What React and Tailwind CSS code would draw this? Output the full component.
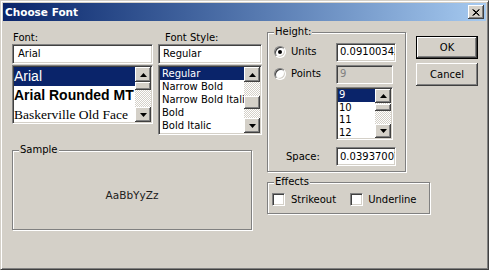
import React from "react";

const ui = "font-['DejaVu_Sans',sans-serif] text-[10px] leading-[12px] text-black";
const sunken =
  "border border-t-[#808080] border-l-[#808080] border-b-white border-r-white shadow-[inset_1px_1px_0_#404040,inset_-1px_-1px_0_#d4d0c8]";
const raised =
  "bg-[#d4d0c8] shadow-[inset_-1px_-1px_0_#404040,inset_1px_1px_0_#ffffff,inset_-2px_-2px_0_#808080]";
const checker =
  "bg-[image:repeating-conic-gradient(#ffffff_0_25%,#d4d0c8_0_50%)] bg-[length:2px_2px]";
const groupBox =
  "border border-[#808080] shadow-[1px_1px_0_#ffffff,inset_1px_1px_0_#ffffff] p-0 m-0 min-w-0";

function Arrow({ up }) {
  return (
    <svg width="7" height="4" viewBox="0 0 7 4">
      <polygon points={up ? "3.5,0 7,4 0,4" : "0,0 7,0 3.5,4"} fill="#000" />
    </svg>
  );
}

function ScrollBtn({ up, h }) {
  return (
    <div className={`${raised} flex w-[16px] shrink-0 items-center justify-center ${h}`}>
      <Arrow up={up} />
    </div>
  );
}

function ScrollBar({ btn, before, thumb }) {
  return (
    <div className="flex w-[16px] shrink-0 flex-col">
      <ScrollBtn up h={btn} />
      <div className={`${checker} ${before}`} />
      <div className={`${raised} ${thumb}`} />
      <div className={`${checker} flex-1`} />
      <ScrollBtn h={btn} />
    </div>
  );
}

function Legend({ children }) {
  return <legend className="ml-[6px] bg-[#d4d0c8] px-[1px] leading-[12px]">{children}</legend>;
}

function Radio({ checked }) {
  return (
    <div className="flex h-[12px] w-[12px] shrink-0 items-center justify-center rounded-full border border-t-[#808080] border-l-[#808080] border-b-white border-r-white bg-white shadow-[inset_1px_1px_0_#404040,inset_-1px_-1px_0_#d4d0c8]">
      {checked && <div className="h-[4px] w-[4px] rounded-full bg-black" />}
    </div>
  );
}

function Check() {
  return <div className={`${sunken} h-[13px] w-[13px] shrink-0 bg-white`} />;
}

export default function App() {
  return (
    <div className={`${ui} h-[274px] w-[493px] overflow-hidden bg-white`}>
      <div className="flex h-[270px] w-[489px] flex-col border border-t-[#d4d0c8] border-l-[#d4d0c8] border-b-[#404040] border-r-[#404040] bg-[#d4d0c8] p-[2px] shadow-[inset_1px_1px_0_#ffffff,inset_-1px_-1px_0_#808080]">
        {/* title bar */}
        <div className="flex h-[18px] shrink-0 items-center justify-between bg-gradient-to-r from-[#0a246a] to-[#a6caf0] pl-[2px] pr-[2px]">
          <span className="text-[10.5px] font-bold text-white">Choose Font</span>
          <div className={`${raised} flex h-[14px] w-[16px] items-center justify-center`}>
            <svg width="8" height="7" viewBox="0 0 8 7">
              <path d="M0.5 0.5 L7 6.5 M1.5 0.5 L7.5 6.5 M7 0.5 L0.5 6.5 M7.5 0.5 L1.5 6.5" stroke="#000" strokeWidth="1" />
            </svg>
          </div>
        </div>

        {/* body */}
        <div className="flex pl-[9px] pt-[5px]">
          {/* left column */}
          <div className="flex w-[250px] flex-col">
            <div className="flex items-start gap-[5px]">
              <div className="flex w-[141px] flex-col">
                <div className="mt-[6px] h-[12px] pl-[1px]">Font:</div>
                <div className={`${sunken} flex h-[20px] items-center bg-white pl-[5px]`}>Arial</div>
                <div className={`${sunken} mt-[1px] flex h-[59px] bg-white p-[1px]`}>
                  <div className="min-w-0 flex-1 overflow-hidden whitespace-nowrap">
                    <div className="h-[19px] bg-[#0a246a] font-['Liberation_Sans',sans-serif] text-[14px] leading-[19px] text-white">
                      Arial
                    </div>
                    <div className="h-[19px] font-['Liberation_Sans',sans-serif] text-[14px] font-bold leading-[19px]">
                      Arial Rounded MT
                    </div>
                    <div className="h-[19px] font-['Liberation_Serif',serif] text-[13.5px] leading-[19px]">
                      Baskerville Old Face
                    </div>
                  </div>
                  <ScrollBar btn="h-[15px]" before="h-0" thumb="h-[8px]" />
                </div>
              </div>

              <div className="flex w-[104px] flex-col">
                <div className="mt-[6px] h-[12px] pl-[7px]">Font Style:</div>
                <div className={`${sunken} flex h-[20px] items-center bg-white pl-[4px]`}>Regular</div>
                <div className={`${sunken} mt-[1px] flex h-[70px] bg-white p-[1px]`}>
                  <div className="min-w-0 flex-1 overflow-hidden whitespace-nowrap leading-[13px]">
                    <div className="h-[13px] bg-[#0a246a] pl-[2px] text-white">Regular</div>
                    <div className="h-[13px] pl-[2px]">Narrow Bold</div>
                    <div className="h-[13px] pl-[2px]">Narrow Bold Italic</div>
                    <div className="h-[13px] pl-[2px]">Bold</div>
                    <div className="h-[13px] pl-[2px]">Bold Italic</div>
                  </div>
                  <ScrollBar btn="h-[15px]" before="h-[14px]" thumb="h-[13px]" />
                </div>
              </div>
            </div>

            <fieldset className={`${groupBox} mt-[9px] h-[86px] w-[240px]`}>
              <Legend>Sample</Legend>
              <div className="flex h-[72px] items-center justify-center pt-[6px] text-[10.5px] text-[#202020]">AaBbYyZz</div>
            </fieldset>
          </div>

          {/* right side */}
          <div className="ml-[5px] flex flex-col">
            <div className="flex items-start">
              <fieldset className={`${groupBox} h-[146px] w-[139px]`}>
                <Legend>Height:</Legend>
                <div className="flex flex-col pl-[6px]">
                  <div className="mt-[5px] flex h-[18px] items-center">
                    <div className="flex w-[62px] items-center gap-[5px]">
                      <Radio checked />
                      <span>Units</span>
                    </div>
                    <div className={`${sunken} flex h-[19px] w-[60px] items-center overflow-hidden whitespace-nowrap bg-white pl-[3px]`}>
                      0.0910034216
                    </div>
                  </div>
                  <div className="mt-[4px] flex h-[18px] items-center">
                    <div className="flex w-[62px] items-center gap-[5px]">
                      <Radio />
                      <span>Points</span>
                    </div>
                    <div className={`${sunken} flex h-[19px] w-[57px] items-center bg-[#d4d0c8] pl-[3px] text-[#808080]`}>9</div>
                  </div>
                  <div className={`${sunken} ml-[62px] mt-[4px] flex h-[53px] w-[57px] bg-white p-[1px]`}>
                    <div className="min-w-0 flex-1 overflow-hidden leading-[12.5px]">
                      <div className="h-[12.5px] bg-[#0a246a] pl-[1px] text-white">9</div>
                      <div className="h-[12.5px] pl-[1px]">10</div>
                      <div className="h-[12.5px] pl-[1px]">11</div>
                      <div className="h-[12.5px] pl-[1px]">12</div>
                    </div>
                    <ScrollBar btn="h-[14px]" before="h-[1px]" thumb="h-[7px]" />
                  </div>
                  <div className="mt-[7px] flex h-[19px] items-center">
                    <div className="w-[62px] pl-[12px]">Space:</div>
                    <div className={`${sunken} flex h-[19px] w-[60px] items-center overflow-hidden whitespace-nowrap bg-white pl-[3px]`}>
                      0.0393700787
                    </div>
                  </div>
                </div>
              </fieldset>

              <div className="ml-[10px] mt-[10px] flex w-[62px] flex-col gap-[4px]">
                <div className="border border-black">
                  <div className={`${raised} flex h-[21px] items-center justify-center`}>OK</div>
                </div>
                <div className={`${raised} flex h-[23px] items-center justify-center`}>Cancel</div>
              </div>
            </div>

            <fieldset className={`${groupBox} mt-[4px] h-[38px] w-[163px]`}>
              <Legend>Effects</Legend>
              <div className="mt-[5px] flex h-[13px] items-center pl-[4px]">
                <Check />
                <span className="ml-[6px]">Strikeout</span>
                <div className="ml-[14px]">
                  <Check />
                </div>
                <span className="ml-[5px]">Underline</span>
              </div>
            </fieldset>
          </div>
        </div>
      </div>
    </div>
  );
}
